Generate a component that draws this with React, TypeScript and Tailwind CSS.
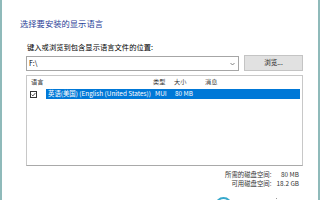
import { type ReactNode } from 'react'

const font = { fontFamily: '"Noto Sans CJK SC", "Microsoft YaHei", sans-serif' }

function Column({ w, children }: { w?: string; children: ReactNode }) {
  return <span className={`shrink-0 whitespace-nowrap ${w ?? ''}`}>{children}</span>
}

export default function App() {
  return (
    <div
      className="relative flex h-[200px] w-[320px] flex-col overflow-hidden border-x-[2px] border-x-[#8fbaba] bg-white text-black"
      style={font}
    >
      {/* Instruction principale */}
      <div className="pl-[18px] pt-[17px] text-[8.3px] leading-[12px] text-[#1f3d96]">
        选择要安装的显示语言
      </div>

      <div className="flex flex-col pl-[24px] pr-[15px]">
        <div className="mt-[13px] pl-[1px] text-[7.3px] leading-[10px]">
          键入或浏览到包含显示语言文件的位置:
        </div>

        <div className="mt-[4px] flex h-[15px] items-stretch gap-[5px]">
          <div className="flex w-[213px] items-center justify-between border border-[#a6a6a6] pl-[2px] pr-[3px] text-[7px]">
            <span>F:\</span>
            <svg width="5" height="4" viewBox="0 0 5 4" className="text-[#666]">
              <path d="M0.5 1 L2.5 3 L4.5 1" fill="none" stroke="currentColor" strokeWidth="0.8" />
            </svg>
          </div>
          <button
            type="button"
            className="-mt-[1px] flex flex-1 items-center justify-center border border-[#c4c4c4] bg-[#e1e1e1] text-[6.5px] text-[#222]"
          >
            浏览...
          </button>
        </div>

        {/* Liste des langues */}
        <div className="mt-[4px] flex h-[91px] flex-col border border-[#c8c8c8] border-b-[#a9a9a9] pt-[1px]">
          <div className="flex h-[10px] items-center pl-[4px] text-[6.2px] text-[#333]">
            <Column w="w-[122px]">语言</Column>
            <Column w="w-[21px]">类型</Column>
            <Column w="w-[31px]">大小</Column>
            <Column>消息</Column>
          </div>
          <div className="mt-[2px] flex h-[10px] items-stretch">
            <div className="ml-[3px] flex w-[16px] items-center">
              <span className="flex h-[7px] w-[7px] items-center justify-center border border-[#333]">
                <svg width="5" height="5" viewBox="0 0 5 5">
                  <path d="M0.6 2.6 L1.9 3.9 L4.4 1" fill="none" stroke="#222" strokeWidth="0.8" />
                </svg>
              </span>
            </div>
            <div className="mr-[2px] flex flex-1 items-center bg-[#0078d7] pl-[2px] text-[6.4px] text-white">
              <Column w="w-[107px]">英语(美国) (English (United States))</Column>
              <Column w="w-[20px]">MUI</Column>
              <Column>80 MB</Column>
            </div>
          </div>
        </div>
      </div>

      {/* Espace disque */}
      <div className="mt-[4px] grid grid-cols-[1fr_auto] gap-x-[5px] whitespace-nowrap pr-[19px] text-[6.4px] leading-[9px] text-[#333]">
        <span className="text-right">所需的磁盘空间:</span>
        <span className="text-right">80 MB</span>
        <span className="text-right">可用磁盘空间:</span>
        <span className="text-right">18.2 GB</span>
      </div>

      <div className="mt-[9px] flex items-start pl-[213px]">
        <span className="h-[18px] w-[17px] shrink-0 rounded-full border-[2px] border-[#38a9cc]" />
        <span className="ml-[44px] mt-[1px] h-[1px] w-[1px] bg-[#999]" />
      </div>
    </div>
  )
}
